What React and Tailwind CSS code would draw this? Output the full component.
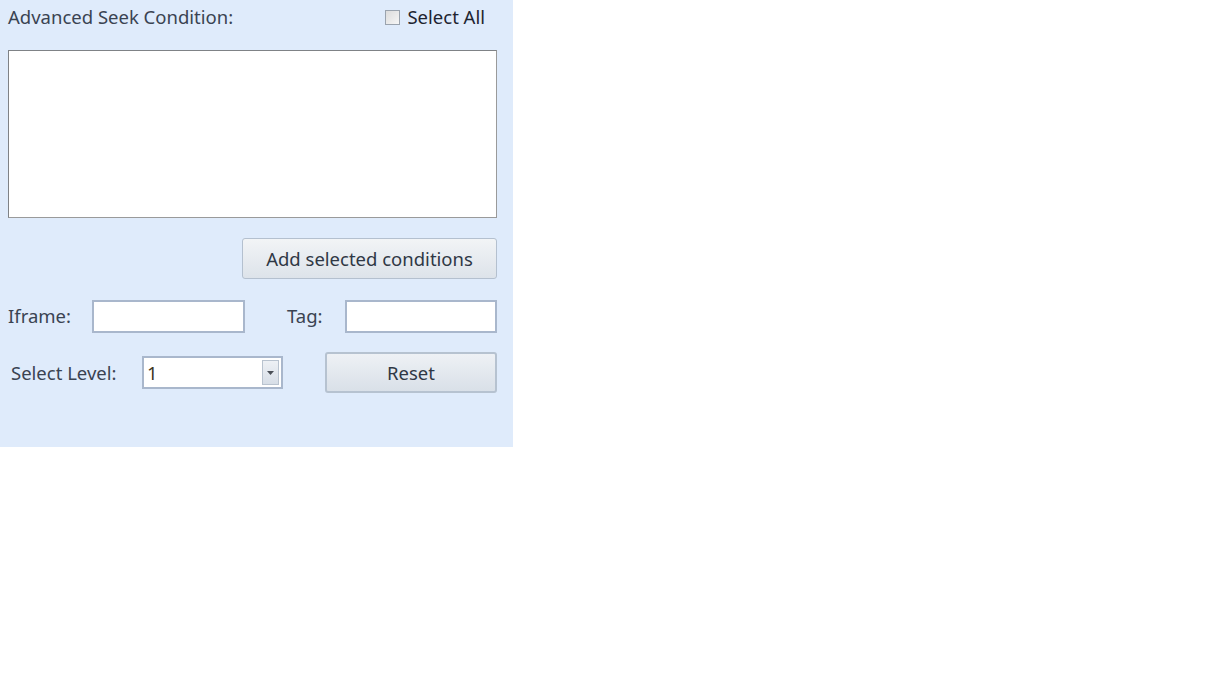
import React, { useState } from "react";

const font = { fontFamily: '"Noto Sans", "Liberation Sans", sans-serif' };

export default function App() {
  const [level, setLevel] = useState("1");
  const [checked, setChecked] = useState(false);

  return (
    <div className="min-h-[691px] bg-white" style={font}>
      <div className="w-[513px] h-[447px] bg-[#dfebfb] px-[8px] pt-[2px] text-[18.5px] leading-[26px] text-[#3a4352]">
        <div className="flex items-center justify-between h-[30px]">
          <span>Advanced Seek Condition:</span>
          <label className="flex items-center gap-[7px] mr-[20px] text-[#1e2430]">
            <span
              onClick={() => setChecked(!checked)}
              className="w-[15px] h-[15px] border border-[#9aa3ae] bg-gradient-to-br from-[#dcdcdc] to-[#f6f6f6]"
            />
            Select All
          </label>
        </div>

        <textarea className="mt-[18px] block w-[489px] h-[168px] bg-white border border-[#9a9a9a] border-t-[#7f8286] border-l-[#7f8286] resize-none outline-none" />

        <div className="flex justify-end mr-[8px] mt-[20px]">
          <button className="w-[255px] h-[41px] rounded-[3px] border border-[#b4c0cf] bg-gradient-to-b from-[#f2f4f6] to-[#dde3ea] text-[#2f3845]">
            Add selected conditions
          </button>
        </div>

        <div className="flex items-center mt-[20px] h-[34px]">
          <span className="w-[84px]">Iframe:</span>
          <input className="w-[153px] h-[33px] bg-white border-2 border-[#a9b7cc] outline-none" />
          <span className="ml-[42px] w-[58px]">Tag:</span>
          <input className="w-[152px] h-[33px] bg-white border-2 border-[#a9b7cc] outline-none" />
        </div>

        <div className="flex items-center mt-[19px] h-[41px]">
          <span className="ml-[3px] w-[131px]">Select Level:</span>
          <div className="relative w-[141px] h-[33px] bg-white border-2 border-[#a9b7cc] flex items-center">
            <span className="pl-[3px] text-[#3d3522]">{level}</span>
            <select
              value={level}
              onChange={(e) => setLevel(e.target.value)}
              className="absolute inset-0 opacity-0"
            >
              <option>1</option>
              <option>2</option>
              <option>3</option>
            </select>
            <span className="absolute right-[2px] top-[2px] w-[17px] h-[25px] border border-[#b9c3cf] bg-gradient-to-b from-[#eef1f5] to-[#d7dee7] flex items-center justify-center pointer-events-none">
              <svg width="7" height="4" viewBox="0 0 7 4">
                <path d="M0 0h7L3.5 4z" fill="#4a4f57" />
              </svg>
            </span>
          </div>
          <button className="ml-[42px] w-[172px] h-[41px] rounded-[3px] border-2 border-[#b6c2d0] bg-gradient-to-b from-[#eef1f5] to-[#d9e0e8] text-[#2f3845]">
            Reset
          </button>
        </div>
      </div>
    </div>
  );
}
